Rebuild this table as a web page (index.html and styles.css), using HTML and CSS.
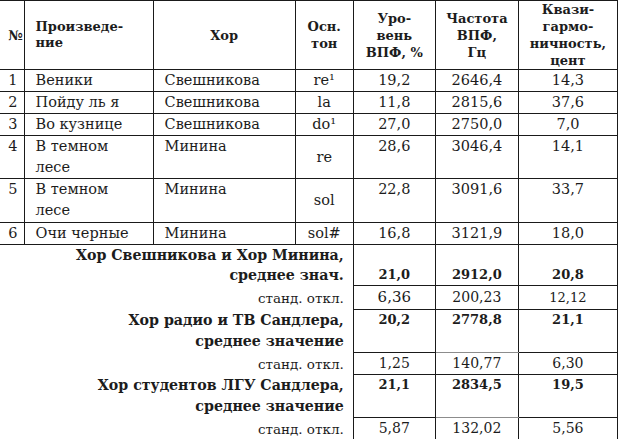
FILE: index.html
```html
<!DOCTYPE html>
<html lang="ru">
<head>
<meta charset="utf-8">
<link rel="stylesheet" href="styles.css">
</head>
<body>
<table class="t">
  <colgroup>
    <col class="c1"><col class="c2"><col class="c3"><col class="c4"><col class="c5"><col class="c6"><col class="c7">
  </colgroup>
  <thead>
    <tr class="h">
      <th class="num">№</th>
      <th class="left">Произведе-<br>ние</th>
      <th>Хор</th>
      <th>Осн.<br>тон</th>
      <th>Уро-<br>вень<br>ВПФ, %</th>
      <th>Частота<br>ВПФ,<br>Гц</th>
      <th>Квази-<br>гармо-<br>ничность,<br>цент</th>
    </tr>
  </thead>
  <tbody>
    <tr class="r22"><td class="n">1</td><td class="txt">Веники</td><td class="txt">Свешникова</td><td class="tone">re¹</td><td>19,2</td><td>2646,4</td><td>14,3</td></tr>
    <tr class="r22"><td class="n">2</td><td class="txt">Пойду ль я</td><td class="txt">Свешникова</td><td class="tone">la</td><td>11,8</td><td>2815,6</td><td>37,6</td></tr>
    <tr class="r22"><td class="n">3</td><td class="txt">Во кузнице</td><td class="txt">Свешникова</td><td class="tone">do¹</td><td>27,0</td><td>2750,0</td><td>7,0</td></tr>
    <tr class="r43"><td class="n">4</td><td class="txt">В темном<br>лесе</td><td class="txt">Минина</td><td class="tone">re</td><td>28,6</td><td>3046,4</td><td>14,1</td></tr>
    <tr class="r44"><td class="n">5</td><td class="txt">В темном<br>лесе</td><td class="txt">Минина</td><td class="tone">sol</td><td>22,8</td><td>3091,6</td><td>33,7</td></tr>
    <tr class="r21"><td class="n">6</td><td class="txt">Очи черные</td><td class="txt">Минина</td><td class="tone">sol#</td><td>16,8</td><td>3121,9</td><td>18,0</td></tr>

    <tr class="s41 g1"><td class="lab" colspan="4">Хор Свешникова и Хор Минина,<br>среднее знач.</td><td class="v dot">21,0</td><td class="v dot">2912,0</td><td class="v dot">20,8</td></tr>
    <tr class="s24"><td class="slab" colspan="4">станд. откл.</td><td class="sd big">6,36</td><td class="sd">200,23</td><td class="sd small">12,12</td></tr>

    <tr class="s43 g2"><td class="lab" colspan="4">Хор радио и ТВ Сандлера,<br>среднее значение</td><td class="v dash">20,2</td><td class="v grey">2778,8</td><td class="v dash">21,1</td></tr>
    <tr class="s22"><td class="slab" colspan="4">станд. откл.</td><td class="sd">1,25</td><td class="sd">140,77</td><td class="sd">6,30</td></tr>

    <tr class="s43 g2"><td class="lab" colspan="4">Хор студентов ЛГУ Сандлера,<br>среднее значение</td><td class="v dash">21,1</td><td class="v grey">2834,5</td><td class="v dash">19,5</td></tr>
    <tr class="s22"><td class="slab" colspan="4">станд. откл.</td><td class="sd">5,87</td><td class="sd">132,02</td><td class="sd">5,56</td></tr>
  </tbody>
</table>
</body>
</html>
```

FILE: styles.css
```css
html, body {
  margin: 0;
  padding: 0;
  background: #ffffff;
}

body {
  font-family: "DejaVu Serif", "Liberation Serif", serif;
  color: #1c1c1c;
}

.t {
  border-collapse: collapse;
  table-layout: fixed;
  width: 618px;
  margin-top: 0;
}

.c1 { width: 24px; }
.c2 { width: 129px; }
.c3 { width: 142px; }
.c4 { width: 58px; }
.c5 { width: 82px; }
.c6 { width: 83px; }
.c7 { width: 99px; }

th, td {
  border: 1px solid #1a1a1a;
  padding: 0;
  overflow: hidden;
}

th:first-child, td.n {
  border-left: none;
}

.h th {
  height: 68px;
  font-size: 13px;
  font-weight: bold;
  line-height: 17px;
  text-align: center;
  vertical-align: middle;
}

.h th.left {
  text-align: left;
  padding-left: 11px;
  line-height: 16px;
}

.h th.num {
  text-align: left;
  padding-left: 8px;
  white-space: nowrap;
  font-size: 13.5px;
}

tbody td {
  font-size: 14.5px;
  line-height: 21px;
  text-align: center;
  vertical-align: top;
}

.r22 td { height: 21px; }
.r43 td { height: 42px; }
.r44 td { height: 43px; }
.r21 td { height: 20px; }

td.n {
  text-align: center;
  padding-left: 2px;
}

td.txt {
  text-align: left;
  padding-left: 11px;
  white-space: nowrap;
}

td.tone {
  vertical-align: middle;
}

td.lab, td.slab {
  border: none;
  text-align: right;
  padding-right: 9px;
  white-space: nowrap;
}

td.lab {
  font-weight: bold;
  font-size: 14.2px;
  line-height: 21px;
}

td.slab {
  font-size: 13.5px;
  line-height: 18px;
  vertical-align: middle;
}

.s41 td { height: 40px; }
.s24 td { height: 23px; }
.s43 td { height: 42px; }
.s22 td { height: 21px; }

.g1 td.lab { vertical-align: top; line-height: 20px; padding-top: 0; }
.g2 td.lab { vertical-align: top; padding-top: 0; }

td.v {
  font-weight: bold;
  font-size: 13px;
  line-height: 20px;
}

.g1 td.v {
  vertical-align: bottom;
  padding-bottom: 0;
}

.g2 td.v {
  vertical-align: top;
  padding-top: 0;
}

td.dot { border-bottom: 1px dotted #222222; }
td.dash { border-bottom: 1px dashed #222222; }
td.grey { border-bottom: 1px solid #8c8c8c; }

td.sd {
  vertical-align: middle;
  font-size: 14px;
  line-height: 19px;
}

td.sd.big { font-size: 15px; }
td.sd.small { font-size: 13px; }
```
